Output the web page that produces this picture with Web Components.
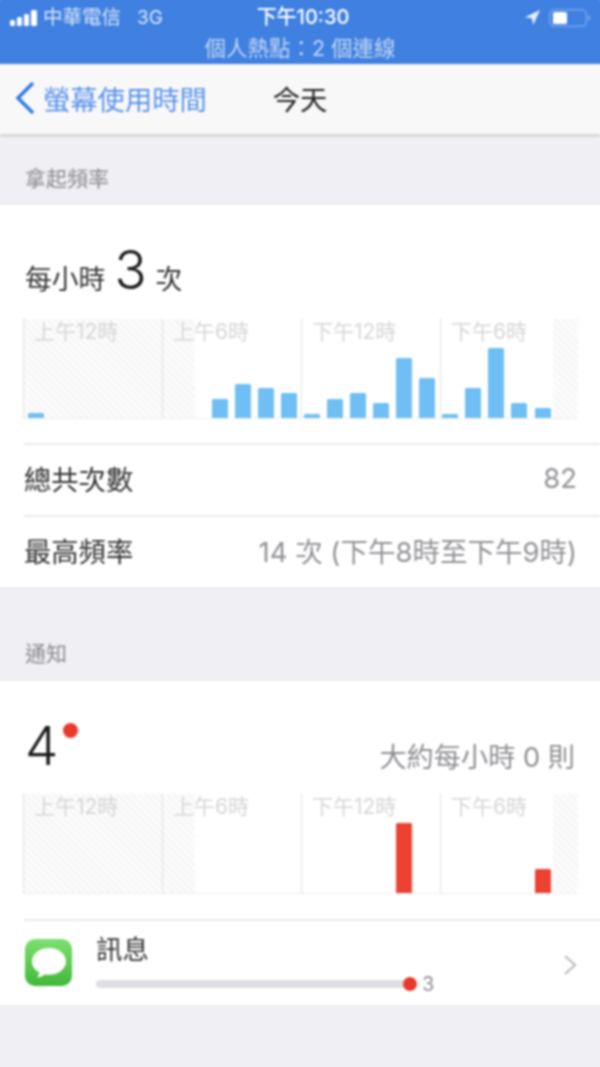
<!DOCTYPE html>
<html lang="zh-Hant">
<head>
<meta charset="utf-8">
<title>今天</title>
<style>
  html, body { margin: 0; padding: 0; background: #efeff4; }
  body { width: 600px; height: 1067px; overflow: hidden; font-family: Inter, "Noto Sans CJK TC", "Noto Sans", sans-serif; }
  #page { display: block; filter: blur(.85px); height: 1067px; }
</style>
</head>
<body>
<div id="page">
  <status-bar></status-bar>
  <nav-bar back="螢幕使用時間" title="今天"></nav-bar>

  <section-label style="height:68px;padding-bottom:12px">拿起頻率</section-label>
  <info-card>
    <div slot="hero" style="height:114px;display:flex;align-items:flex-start;padding-top:30px;box-sizing:border-box">
      <big-stat prefix="每小時" value="3" suffix="次"></big-stat>
    </div>
    <hour-chart color="#6fbff5" bars="0:5,8:19,9:34,10:30,11:25,12:4,13:19,14:25,15:15,16:60,17:40,18:4,19:30,20:70,21:15,22:10"></hour-chart>
    <info-row label="總共次數" value="82" first></info-row>
    <info-row label="最高頻率" value="14 次 (下午8時至下午9時)"></info-row>
  </info-card>

  <section-label style="height:94px">通知</section-label>
  <info-card>
    <div slot="hero" style="height:113px;box-sizing:border-box;padding-top:30px">
      <notify-stat value="4" note="大約每小時 0 則"></notify-stat>
    </div>
    <hour-chart color="#ec4232" bars="16:70,22:24"></hour-chart>
    <app-row name="訊息" count="3"></app-row>
  </info-card>
</div>

<script>
const CJK = 'Inter, "Noto Sans CJK TC", "Noto Sans", sans-serif'

class StatusBar extends HTMLElement {
  constructor() {
    super()
    this.attachShadow({mode: "open"})
  }
  connectedCallback() {
    this.shadowRoot.innerHTML = `
      <style>
        :host { display: flex; flex-direction: column; height: 64px; background: #3f80e0; box-shadow: 0 -8px 0 #3f80e0, -8px 0 0 #3f80e0, 8px 0 0 #3f80e0; color: #fff; font-family: ${CJK}; box-sizing: border-box; padding-top: 5px; }
        .top { display: grid; grid-template-columns: minmax(0, 1fr) auto minmax(0, 1fr); align-items: center; height: 25px; padding: 0 9px 0 10px; }
        .left { display: flex; align-items: center; font-size: 19.500px; line-height: 25px; color: #d9e6fa; white-space: nowrap; }
        .left svg { margin-right: 6px; }
        .net { margin-left: 16px; font-size: 19px; }
        .time { font-size: 20px; font-weight: 500; white-space: nowrap; line-height: 25px; padding-left: 5px; }
        .right { display: flex; align-items: center; justify-content: flex-end; gap: 9px; }
        .hotspot { text-align: center; font-size: 21.500px; line-height: 28px; margin-top: 4px; color: #c2d6f5; white-space: nowrap; }
      </style>
      <div class="top">
        <div class="left">
          <svg width="27" height="16" viewBox="0 0 27 16" fill="#fff"><rect x="0" y="10" width="5" height="6" rx="1.500"/><rect x="7" y="7" width="5" height="9" rx="1.500"/><rect x="14" y="4" width="5" height="12" rx="1.500"/><rect x="21" y="0" width="6" height="16" rx="1.500"/></svg>
          <span>中華電信</span><span class="net">3G</span>
        </div>
        <div class="time">下午10:30</div>
        <div class="right">
          <svg width="15" height="15" viewBox="0 0 15 15" fill="#e6effc"><path d="M15 0 0 7.200l6.800 1L8.200 15z"/></svg>
          <svg width="42" height="18" viewBox="0 0 42 18" fill="none"><rect x=".75" y=".75" width="36.500" height="16.500" rx="4.500" stroke="#76a4e9" stroke-width="1.500"/><rect x="4" y="3" width="14" height="12" rx="1.500" fill="#fff"/><path d="M39 6v6c1.500-.5 2.500-1.700 2.500-3S40.500 6.500 39 6z" fill="#76a4e9"/></svg>
        </div>
      </div>
      <div class="hotspot">個人熱點：2 個連線</div>
    `
  }
}

class NavBar extends HTMLElement {
  constructor() {
    super()
    this.attachShadow({mode: "open"})
  }
  connectedCallback() {
    this.shadowRoot.innerHTML = `
      <style>
        :host { display: grid; grid-template-columns: minmax(0, 1fr) auto minmax(0, 1fr); align-items: center; height: 73px; box-sizing: border-box; background: #f8f8f9; box-shadow: -8px 0 0 #f8f8f9, 8px 0 0 #f8f8f9; border-bottom: 3px solid #d8d8dc; padding: 0 15px 2px; font-family: ${CJK}; font-size: 27.300px; }
        .back { display: flex; align-items: center; gap: 8px; color: #5b93ec; white-space: nowrap; }
        .title { color: #222; }
      </style>
      <div class="back">
        <svg width="20" height="34" viewBox="0 0 20 34" fill="none"><path d="M18 2 3 17l15 15" stroke="#2f7aee" stroke-width="3.500"/></svg>
        <span>${this.getAttribute("back")}</span>
      </div>
      <div class="title">${this.getAttribute("title")}</div>
      <div></div>
    `
  }
}

class SectionLabel extends HTMLElement {
  constructor() {
    super()
    this.attachShadow({mode: "open"})
  }
  connectedCallback() {
    this.shadowRoot.innerHTML = `
      <style>
        :host { display: flex; align-items: flex-end; box-sizing: border-box; padding: 0 0 13px 25px; font-family: ${CJK}; font-size: 21px; line-height: 28px; color: #8b8b90; }
      </style>
      <slot></slot>
    `
  }
}

class InfoCard extends HTMLElement {
  constructor() {
    super()
    this.attachShadow({mode: "open"})
  }
  connectedCallback() {
    this.shadowRoot.innerHTML = `
      <style>
        :host { display: block; background: #fff; box-shadow: -8px 0 0 #fff, 8px 0 0 #fff; }
      </style>
      <slot name="hero"></slot>
      <slot></slot>
    `
  }
}

class BigStat extends HTMLElement {
  constructor() {
    super()
    this.attachShadow({mode: "open"})
  }
  connectedCallback() {
    this.shadowRoot.innerHTML = `
      <style>
        :host { display: flex; align-items: baseline; padding-left: 25px; font-family: ${CJK}; font-size: 26.800px; color: #333; line-height: 70px; height: 70px; }
        b { font: 300 53px/70px ${CJK}; color: #1a1a1a; margin: 0 9px 0 9px; }
      </style>
      <span>${this.getAttribute("prefix")}</span><b>${this.getAttribute("value")}</b><span>${this.getAttribute("suffix")}</span>
    `
  }
}

class NotifyStat extends HTMLElement {
  constructor() {
    super()
    this.attachShadow({mode: "open"})
  }
  connectedCallback() {
    this.shadowRoot.innerHTML = `
      <style>
        :host { display: flex; justify-content: space-between; align-items: flex-start; padding: 0 25px; position: relative; font-family: ${CJK}; height: 70px; line-height: 70px; }
        b { font: 300 53px/70px ${CJK}; color: #1a1a1a; }
        .dot { position: absolute; left: 63px; top: 12px; width: 15px; height: 15px; border-radius: 50%; background: #e8392b; }
        .note { font-size: 27.200px; color: #8e8e93; margin-top: 12px; }
      </style>
      <b>${this.getAttribute("value")}</b><i class="dot"></i><span class="note">${this.getAttribute("note")}</span>
    `
  }
}

class HourChart extends HTMLElement {
  constructor() {
    super()
    this.attachShadow({mode: "open"})
  }
  connectedCallback() {
    const color = this.getAttribute("color")
    const bars = this.getAttribute("bars").split(",").map(b => b.split(":").map(Number))
    const labels = ["上午12時", "上午6時", "下午12時", "下午6時"]
    this.shadowRoot.innerHTML = `
      <style>
        :host { display: block; position: relative; height: 100px; margin: 0 22px 0 23px; border-bottom: 1px solid #f0f0f2; box-sizing: border-box; font-family: ${CJK}; }
        .hatch { position: absolute; top: 0; bottom: 0; background: repeating-linear-gradient(45deg, #f5f5f6 0 2.500px, #fdfdfd 2.500px 5px); }
        .quarters { position: absolute; inset: 0; display: grid; grid-template-columns: repeat(4, 139px); }
        .q { border-left: 1px dotted #c8c8cc; padding: 0 0 0 10px; font-size: 21px; line-height: 26px; color: #d6d6d9; white-space: nowrap; }
        .bars { position: absolute; inset: 0 0 0 1px; display: grid; grid-template-columns: repeat(24, 23.050px); align-items: end; }
        .bar { width: 16px; margin-left: 3.500px; border-radius: 1.500px 1.500px 0 0; background: ${color}; }
      </style>
      <div class="hatch" style="left:0;width:172px"></div>
      <div class="hatch" style="right:0;width:25px"></div>
      <div class="quarters">${labels.map(l => `<div class="q">${l}</div>`).join("")}</div>
      <div class="bars">${bars.map(([i, h]) => `<div class="bar" style="grid-column:${i + 1};grid-row:1;height:${h}px"></div>`).join("")}</div>
    `
  }
}

class InfoRow extends HTMLElement {
  constructor() {
    super()
    this.attachShadow({mode: "open"})
  }
  connectedCallback() {
    this.shadowRoot.innerHTML = `
      <style>
        :host { display: block; padding-left: 24px; font-family: ${CJK}; font-size: 27.300px; }
        :host([first]) { margin-top: 24px; }
        .in { display: flex; justify-content: space-between; align-items: center; height: 72px; box-sizing: border-box; border-top: 2px solid #ebebed; padding: 0 23px 4px 0; color: #333; }
        .v { color: #929297; font-size: 27.500px; white-space: nowrap; }
      </style>
      <div class="in"><span>${this.getAttribute("label")}</span><span class="v">${this.getAttribute("value")}</span></div>
    `
  }
}

class AppRow extends HTMLElement {
  constructor() {
    super()
    this.attachShadow({mode: "open"})
  }
  connectedCallback() {
    this.shadowRoot.innerHTML = `
      <style>
        :host { display: block; margin: 25px 0 0 24px; border-top: 2px solid #ebebed; height: 86px; box-sizing: border-box; font-family: ${CJK}; }
        .row { display: flex; align-items: flex-start; height: 100%; padding-top: 18px; box-sizing: border-box; }
        .icon { flex: none; width: 47px; height: 47px; margin-left: 1px; border-radius: 10px; background: linear-gradient(#7ce06f, #42b83a); display: flex; align-items: center; justify-content: center; }
        .main { margin-left: 24px; width: 340px; margin-top: -6px; }
        .name { font-size: 26.500px; line-height: 32px; color: #333; }
        .track { display: flex; align-items: center; margin-top: 8px; height: 22px; }
        .bar { width: 314px; height: 8px; background: #dfdfe3; border-radius: 4px; position: relative; }
        .dot { position: absolute; right: -7px; top: -3px; width: 14px; height: 14px; border-radius: 50%; background: #e8392b; }
        .count { margin-left: 12px; font: 20px ${CJK}; color: #8e8e93; }
        .chev { margin: 16px 0 0 auto; padding-right: 23px; }
      </style>
      <div class="row">
        <div class="icon">
          <svg width="38" height="34" viewBox="0 0 38 34"><path d="M19 2C9.100 2 2 8.300 2 15.500c0 4.700 3 8.700 7.500 11-.3 1.800-1.300 3.500-2.500 5 2.800-.3 5.800-1.500 8-3.100 1.300.2 2.600.3 4 .3 9.900 0 17-6 17-13.200S28.900 2 19 2z" fill="#fff"/></svg>
        </div>
        <div class="main">
          <div class="name">${this.getAttribute("name")}</div>
          <div class="track"><div class="bar"><i class="dot"></i></div><span class="count">${this.getAttribute("count")}</span></div>
        </div>
        <svg class="chev" width="14" height="20" viewBox="0 0 14 20" fill="none"><path d="M2 1l10 9-10 9" stroke="#bdbdc2" stroke-width="2.200"/></svg>
      </div>
    `
  }
}

customElements.define("status-bar", StatusBar)
customElements.define("nav-bar", NavBar)
customElements.define("section-label", SectionLabel)
customElements.define("info-card", InfoCard)
customElements.define("big-stat", BigStat)
customElements.define("notify-stat", NotifyStat)
customElements.define("hour-chart", HourChart)
customElements.define("info-row", InfoRow)
customElements.define("app-row", AppRow)
</script>
</body>
</html>
